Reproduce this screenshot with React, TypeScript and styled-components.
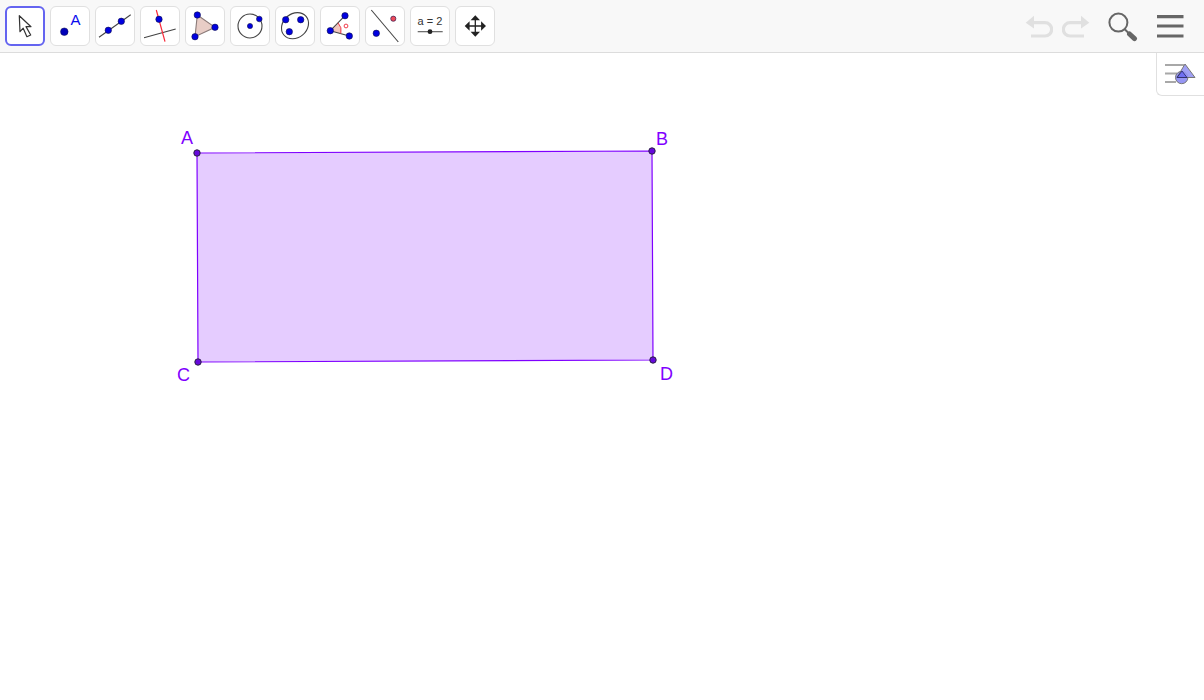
import * as React from 'react';
import styled, { createGlobalStyle } from 'styled-components';

const GlobalStyle = createGlobalStyle`
	html, body {
		margin: 0;
		padding: 0;
		height: 100%;
		background: #fff;
		font-family: 'Liberation Sans', Arial, sans-serif;
		overflow: hidden;
	}
`;

const Page = styled.div`
	width: 1204px;
	height: 700px;
	display: flex;
	flex-direction: column;
	background: #fff;
`;

const Toolbar = styled.header`
	height: 52px;
	flex: none;
	display: flex;
	justify-content: space-between;
	background: #f8f8f8;
	border-bottom: 1px solid #dcdcdc;
`;

const ToolGroup = styled.div`
	display: flex;
	gap: 5px;
	padding: 6px 0 0 5px;
`;

const ToolButton = styled.button<{ $active?: boolean }>`
	width: 40px;
	height: 40px;
	padding: 0;
	box-sizing: border-box;
	background: #fff;
	border: ${p => (p.$active ? '2px solid #6464f0' : '1px solid #e0e0e0')};
	border-radius: 6px;
	position: relative;
	svg {
		position: absolute;
		left: ${p => (p.$active ? '-2px' : '-1px')};
		top: ${p => (p.$active ? '-2px' : '-1px')};
		display: block;
	}
`;

const Actions = styled.div`
	display: flex;
	align-items: center;
	padding-right: 20px;
`;

const ActionButton = styled.button<{ $gap: number }>`
	margin-left: ${p => p.$gap}px;
	padding: 0;
	border: 0;
	background: none;
	display: flex;
	svg {
		display: block;
	}
`;

const Canvas = styled.main`
	flex: 1;
	position: relative;
	background: #fff;
`;

const Drawing = styled.svg`
	display: block;
	width: 1204px;
	height: 647px;
`;

const PointLabel = styled.text`
	font-family: 'Liberation Sans', Arial, sans-serif;
	font-size: 18px;
	fill: #7f00ff;
`;

const StyleBarToggle = styled.button`
	position: absolute;
	top: 0;
	right: 0;
	width: 48px;
	height: 43px;
	padding: 0;
	box-sizing: border-box;
	background: #fff;
	border: 0;
	border-left: 1px solid #e0e0e0;
	border-bottom: 1px solid #e0e0e0;
	border-bottom-left-radius: 6px;
	svg {
		display: block;
	}
`;

const IconText = styled.text<{ $size: number; $color: string }>`
	font-family: 'Liberation Sans', Arial, sans-serif;
	font-size: ${p => p.$size}px;
	fill: ${p => p.$color};
`;

const BLUE = '#0000e0';

const Dot = ({ x, y, r = 3.2, fill = BLUE }: { x: number; y: number; r?: number; fill?: string }) => (
	<circle cx={x} cy={y} r={r} fill={fill} stroke="#10104a" strokeWidth={0.6} />
);

const Icon: React.FC<{ children: React.ReactNode }> = ({ children }) => (
	<svg width="40" height="40" viewBox="0 0 40 40" fill="none">
		{children}
	</svg>
);

const tools: React.ReactNode[] = [
	<Icon key="move">
		<path
			d="M14.3 9.7 L26 20.7 L21 20.6 L25.7 29 L21.9 30.7 L18.2 22.2 L15 25.7 Z"
			fill="#fff"
			stroke="#333"
			strokeWidth={1.2}
			strokeLinejoin="round"
		/>
	</Icon>,
	<Icon key="point">
		<circle cx={14.3} cy={25.7} r={3.8} fill="#0000b8" stroke="#10104a" strokeWidth={0.5} />
		<IconText x={20.4} y={19} $size={15} $color="#0a0aee">
			A
		</IconText>
	</Icon>,
	<Icon key="line">
		<path d="M4 31.3 L35.7 8.7" stroke="#444" strokeWidth={1.1} />
		<Dot x={13.3} y={24.3} />
		<Dot x={26.3} y={15.3} />
	</Icon>,
	<Icon key="perp">
		<path d="M4 31.7 L35.7 23" stroke="#444" strokeWidth={1.1} />
		<path d="M16.3 4 L25 35.7" stroke="#f82a3a" strokeWidth={1.2} />
		<Dot x={19} y={13.3} />
	</Icon>,
	<Icon key="polygon">
		<path d="M12.3 9 L30 21.3 L10 30.7 Z" fill="#e8cdc6" stroke="#8a7a78" strokeWidth={1.1} />
		<Dot x={12.3} y={9} />
		<Dot x={30} y={21.3} />
		<Dot x={10} y={30.7} />
	</Icon>,
	<Icon key="circle">
		<circle cx={20} cy={20} r={12} stroke="#444" strokeWidth={1.1} />
		<Dot x={20} y={20} r={2.6} />
		<Dot x={29.3} y={13} r={2.8} />
	</Icon>,
	<Icon key="conic">
		<ellipse cx={20} cy={19.7} rx={14.5} ry={12} transform="rotate(-40 20 19.7)" stroke="#444" strokeWidth={1.1} />
		<Dot x={10.7} y={13.7} />
		<Dot x={25.7} y={13.7} />
		<Dot x={14.3} y={25.7} />
	</Icon>,
	<Icon key="angle">
		<path d="M10.3 24.7 L18 16.8 A11.5 11.5 0 0 1 20.8 27.6 Z" fill="#f2c6be" />
		<path d="M25 9.7 L10.3 24.7 L29.3 30" stroke="#444" strokeWidth={1.1} />
		<path d="M18 16.8 A11.5 11.5 0 0 1 20.8 27.6" stroke="#f03a4a" strokeWidth={1} />
		<circle cx={26} cy={20} r={1.9} stroke="#f03a4a" strokeWidth={1} />
		<Dot x={10.3} y={24.7} />
		<Dot x={25} y={9.7} />
		<Dot x={29.3} y={30} />
	</Icon>,
	<Icon key="reflect">
		<path d="M6.3 4 L33.3 36" stroke="#444" strokeWidth={1.1} />
		<Dot x={11.3} y={27.3} />
		<Dot x={28.3} y={12.7} r={2.6} fill="#ee4a5a" />
	</Icon>,
	<Icon key="slider">
		<IconText x={20} y={19.4} textAnchor="middle" $size={11} $color="#333">
			a = 2
		</IconText>
		<path d="M7.7 25.7 H32.7" stroke="#555" strokeWidth={1.1} />
		<circle cx={20} cy={25.7} r={2.4} fill="#222" />
	</Icon>,
	<Icon key="pan">
		<path d="M20.3 12 V28 M12 20 H28.6" stroke="#222" strokeWidth={1.3} />
		<path
			d="M20.3 9.3 L25 14.2 H15.6 Z M20.3 30.7 L25 25.8 H15.6 Z M9.7 20 L14.6 15.3 V24.7 Z M31 20 L26.1 15.3 V24.7 Z"
			fill="#222"
		/>
	</Icon>,
];

const App: React.FC = () => {
	return (
		<Page>
			<GlobalStyle />
			<Toolbar>
				<ToolGroup>
					{tools.map((tool, i) => (
						<ToolButton key={i} $active={i === 0}>
							{tool}
						</ToolButton>
					))}
				</ToolGroup>
				<Actions>
					<ActionButton $gap={0}>
						<svg width="28" height="24" viewBox="0 0 28 24" fill="none">
							<path d="M0.7 8.7 L9 1.7 V14.5 Z" fill="#e0e0e0" />
							<path d="M7 8.7 H20 A6.5 6.5 0 0 1 20 22 H6" stroke="#e0e0e0" strokeWidth={3.2} />
						</svg>
					</ActionButton>
					<ActionButton $gap={9}>
						<svg width="28" height="24" viewBox="0 0 28 24" fill="none">
							<path d="M27.3 8.7 L19 1.7 V14.5 Z" fill="#e0e0e0" />
							<path d="M21 8.7 H8 A6.5 6.5 0 0 0 8 22 H22" stroke="#e0e0e0" strokeWidth={3.2} />
						</svg>
					</ActionButton>
					<ActionButton $gap={17}>
						<svg width="32" height="32" viewBox="0 0 32 32" fill="none">
							<circle cx={11.4} cy={12.6} r={9} stroke="#666" strokeWidth={2} />
							<path d="M18 19.5 L22 23.5" stroke="#666" strokeWidth={2} />
							<path d="M22.5 24 L27.5 28.6" stroke="#666" strokeWidth={5} strokeLinecap="round" />
						</svg>
					</ActionButton>
					<ActionButton $gap={17}>
						<svg width="28" height="24" viewBox="0 0 28 24" fill="none">
							<path d="M1 2.7 H27.5 M1 12 H27.5 M1 22 H27.5" stroke="#666" strokeWidth={3.2} />
						</svg>
					</ActionButton>
				</Actions>
			</Toolbar>
			<Canvas>
				<Drawing viewBox="0 53 1204 647">
					<polygon
						points="197,153 652,151 653,360 198,362"
						fill="#e5ccff"
						stroke="#7f00ff"
						strokeWidth={1.2}
					/>
					{[
						[197, 153],
						[652, 151],
						[653, 360],
						[198, 362],
					].map(([x, y]) => (
						<circle key={`${x}-${y}`} cx={x} cy={y} r={3.2} fill="#6608dc" stroke="#2a2040" strokeWidth={1} />
					))}
					<PointLabel x={181} y={144}>
						A
					</PointLabel>
					<PointLabel x={656} y={145}>
						B
					</PointLabel>
					<PointLabel x={177} y={381}>
						C
					</PointLabel>
					<PointLabel x={660} y={379.5}>
						D
					</PointLabel>
				</Drawing>
				<StyleBarToggle>
					<svg width="47" height="42" viewBox="0 0 47 42" fill="none">
						<path d="M8 12 H27 M8 20.5 H20 M8 29 H19" stroke="#a8a8a8" strokeWidth={2.2} />
						<circle cx={24.7} cy={24.5} r={6.2} fill="#9696f4" stroke="#777" strokeWidth={1} />
						<path d="M28 11 L38 24.5 H20 Z" fill="#9696f4" stroke="#777" strokeWidth={1} fillOpacity={0.9} />
						<path d="M25 18 L30 24.5 H20 Z" fill="#4a4af0" fillOpacity={0.5} stroke="#222266" strokeWidth={0.8} />
					</svg>
				</StyleBarToggle>
			</Canvas>
		</Page>
	);
};

export default App;
